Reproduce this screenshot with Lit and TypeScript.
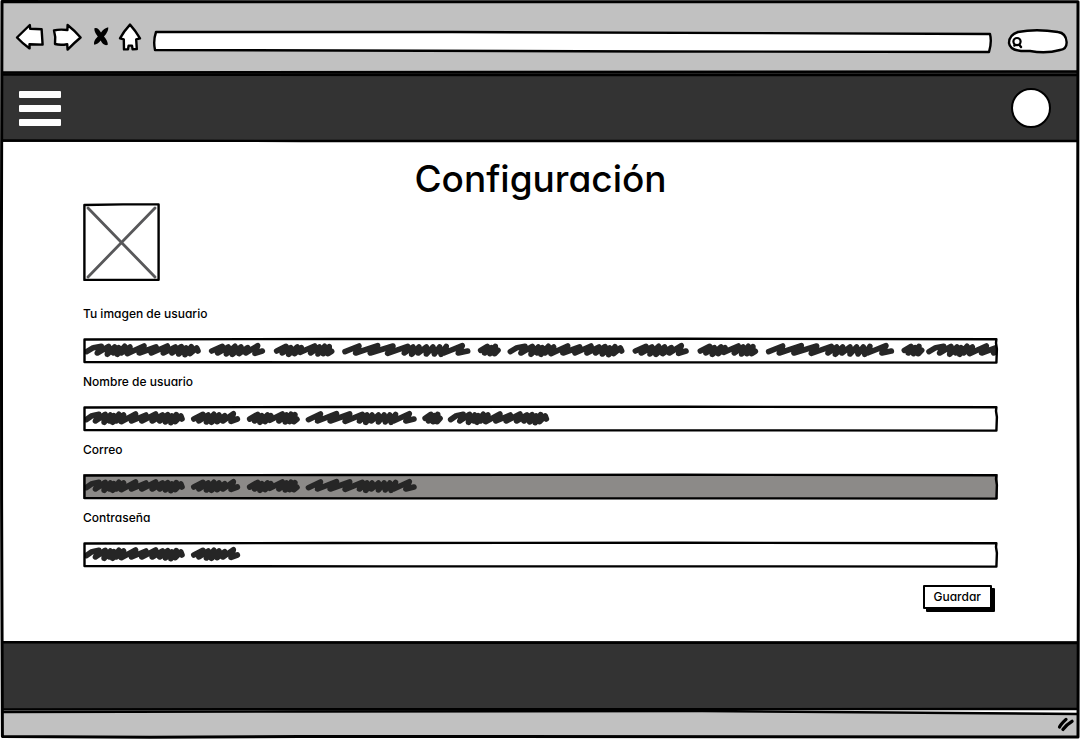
import { LitElement, html, css, svg } from "lit";
import { customElement, property } from "lit/decorators.js";

interface Word {
  width: number;
  d: string;
}

// Hand-scribbled words, drawn in units of a third of a pixel.
const A: Word = { width: 375, d: "M8,26 L28,14 L52,10 L40,30 L74,10 L70,34 L92,12 L88,30 L104,14 L100,34 L122,10 L112,30 L138,12 L130,32 L180,9 L166,30 L216,12 L202,30 L250,9 L238,30 L274,12 L264,30 L292,11 L284,33 L306,15 L303,35 L322,11 L318,32 L338,15 L342,24" };
const B: Word = { width: 195, d: "M8,24 L40,10 L26,30 L58,12 L52,33 L78,10 L70,34 L96,12 L90,32 L116,14 L110,30 L146,8 L138,31 L160,24" };
const C: Word = { width: 205, d: "M8,24 L36,10 L25,30 L50,14 L44,34 L70,12 L62,32 L82,14 L78,28 L122,9 L110,30 L136,12 L132,33 L152,10 L148,32 L166,11 L162,32 L173,25" };
const D: Word = { width: 407, d: "M8,26 L50,9 L40,30 L106,8 L84,30 L152,9 L136,31 L196,10 L186,30 L212,12 L208,34 L230,12 L228,30 L252,12 L252,33 L272,12 L276,33 L292,12 L296,34 L312,10 L305,30 L360,8 L348,30 L376,24" };
const E: Word = { width: 89, d: "M8,22 L28,10 L20,30 L40,14 L36,32 L52,10 L50,32 L60,22" };
const WORDS = [A, B, C, D, E];

@customElement("scribble-text")
export class ScribbleText extends LitElement {
  @property({ type: Number }) words = 1;
  @property({ type: Number }) stretch = 1;

  static styles = css`
    :host { display: block; pointer-events: none; }
    .ink { display: block; width: 100%; height: 100%; overflow: hidden; }
    .stroke {
      fill: none;
      stroke: #262626;
      stroke-width: 5.6;
      stroke-linecap: round;
      stroke-linejoin: round;
      vector-effect: non-scaling-stroke;
    }
  `;

  render() {
    let x = 0;
    const parts = Array.from({ length: this.words }, (_, i) => {
      const word = WORDS[i % WORDS.length];
      // Every second short word is followed by a tighter space.
      const space = i % 10 === 9 ? -15 : 0;
      const part = svg`<path class="stroke" transform="translate(${x} 0)" d=${word.d}></path>`;
      x += word.width + space;
      return part;
    });
    return html`<svg class="ink" aria-hidden="true">
      <g transform="translate(0 5) scale(${this.stretch / 3} ${1 / 3})">${parts}</g>
    </svg>`;
  }
}

@customElement("sketch-field")
export class SketchField extends LitElement {
  @property() label = "";
  @property() type = "text";
  @property({ type: Number }) words = 1;
  @property({ type: Number }) stretch = 0.86;
  @property({ type: Boolean }) disabled = false;

  static styles = css`
    :host { display: block; }
    .label { display: block; width: fit-content; font-size: 12px; line-height: 16px; margin-bottom: 16px; }
    .box { position: relative; height: 25px; }
    .input {
      display: block;
      box-sizing: border-box;
      width: 100%;
      height: 25px;
      padding: 0 6px;
      border: 0;
      border-radius: 0;
      background: #fff;
      font: inherit;
      font-size: 12px;
      outline: none;
    }
    .input:disabled { background: #8c8a88; }
    .ink { position: absolute; inset: 0 2px 0 1px; }
    .edge { position: absolute; inset: 0; width: 100%; height: 100%; overflow: visible; pointer-events: none; }
    .line { fill: none; stroke: #000; stroke-width: 2.4; stroke-linejoin: round; vector-effect: non-scaling-stroke; }
  `;

  render() {
    return html`
      <label class="label" for="field">${this.label}</label>
      <div class="box">
        <input class="input" id="field" type=${this.type} ?disabled=${this.disabled} />
        <scribble-text class="ink" .words=${this.words} .stretch=${this.stretch}></scribble-text>
        <svg class="edge" viewBox="0 0 915 25" preserveAspectRatio="none" aria-hidden="true">
          <path class="line" d="M1.5,1.5 L250,1 L600,0.8 L913.4,1.2 L913,5 L913.9,11 L913.4,24.6 L700,24.4 L300,24.4 L1.5,24 Z"></path>
        </svg>
      </div>
    `;
  }
}

@customElement("app-root")
export class AppRoot extends LitElement {
  static styles = css`
    :host {
      display: block;
      color: #000;
      font-family: Inter, Lato, "Liberation Sans", sans-serif;
      font-feature-settings: "cv11";
      font-weight: 500;
    }
    .window {
      position: relative;
      box-sizing: border-box;
      display: flex;
      flex-direction: column;
      min-height: 100vh;
      padding: 2px 2px 3px;
      background: #fff;
    }
    .frame { position: absolute; inset: 0; width: 100%; height: 100%; pointer-events: none; }
    .line { fill: none; stroke: #000; stroke-width: 2.4; stroke-linejoin: round; vector-effect: non-scaling-stroke; }
    .thick { stroke-width: 3; }
    .browser {
      display: flex;
      align-items: center;
      height: 70px;
      padding: 0 10px 0 12px;
      background: #c1c1c1;
    }
    .tool { display: block; padding: 0; border: 0; background: none; line-height: 0; }
    .back { margin-right: 6px; }
    .forward { margin-right: 10px; }
    .stop { margin-right: 8px; }
    .home { margin-right: 11px; }
    .icon { display: block; overflow: visible; }
    .shape { fill: #fff; stroke: #000; stroke-width: 2.4; stroke-linejoin: round; stroke-linecap: round; }
    .mark { fill: none; stroke: #000; stroke-linecap: round; }
    .address { position: relative; flex: 1; height: 24px; margin: 8px 14px 0 0; }
    .search { position: relative; width: 62px; height: 26px; margin-top: 8px; }
    .outline { position: absolute; inset: 0; width: 100%; height: 100%; overflow: visible; }
    .entry {
      position: absolute;
      inset: 3px 8px 3px 8px;
      box-sizing: border-box;
      width: calc(100% - 16px);
      border: 0;
      padding: 0;
      background: none;
      outline: none;
      font: inherit;
      font-size: 12px;
    }
    .search .entry { inset: 3px 8px 3px 18px; width: 36px; }
    .bar {
      position: relative;
      display: flex;
      align-items: center;
      justify-content: space-between;
      box-sizing: border-box;
      height: 70px;
      padding: 2px 27px 0 17px;
      background: #333;
    }
    .rule { position: absolute; inset: 0; width: 100%; height: 100%; overflow: visible; pointer-events: none; }
    .menu { display: flex; flex-direction: column; gap: 7px; padding: 0; border: 0; background: none; }
    .stripe { display: block; width: 42px; height: 7px; border-radius: 1px; background: #fff; }
    .avatar { box-sizing: border-box; width: 40px; height: 40px; padding: 0; border: 2px solid #000; border-radius: 50%; background: #fff; }
    .main { flex: 1; padding: 13px 80px 32px 81px; }
    .title { margin: 0; font-size: 37px; line-height: 48px; font-weight: 500; text-align: center; }
    .picture { display: block; width: 77px; height: 78px; margin-bottom: 25px; }
    .form { display: grid; gap: 11px; }
    .save {
      justify-self: end;
      box-sizing: border-box;
      height: 24px;
      margin: 7px 6px 0 0;
      padding: 0 9px;
      border: 2px solid #000;
      border-radius: 1px;
      background: #fff;
      box-shadow: 3px 3px 0 #000;
      color: #000;
      font: inherit;
      font-size: 12px;
      line-height: 20px;
    }
    .footer { position: relative; height: 69px; background: #333; }
    .status { display: flex; justify-content: flex-end; align-items: center; height: 26px; padding-right: 3px; background: #c1c1c1; }
  `;

  render() {
    return html`
      <div class="window">
        <header class="browser">
          <button class="tool back" aria-label="Atrás">
            <svg class="icon" width="31" height="28" viewBox="0 0 31 28" aria-hidden="true">
              <path class="shape" d="M3,14.5 L15.8,2 L16.2,5.8 L27.6,6.2 L28.6,21.6 L15.5,21.2 L15.6,25.4 Q8,20 3,14.5 Z"></path>
            </svg>
          </button>
          <button class="tool forward" aria-label="Adelante">
            <svg class="icon" width="31" height="28" viewBox="0 0 31 28" aria-hidden="true">
              <path class="shape" d="M3,7.5 Q8,6 16.4,7 L16.6,2 Q23,7 29.6,14.5 Q23,20 16.6,26.6 L16.2,21.2 Q9,22.4 4,21 Q5,14 3,7.5 Z"></path>
            </svg>
          </button>
          <button class="tool stop" aria-label="Detener">
            <svg class="icon" width="18" height="22" viewBox="0 0 18 22" aria-hidden="true">
              <path d="M2.4,2.2 Q6,0.8 9,6.6 Q12,2 16.2,1.2 Q17,5 12,10.4 Q16,15 15.8,18.8 Q12,20.6 8.6,14.6 Q5.8,18.6 2.2,18.8 Q1,15 5.8,10.4 Q2,6 2.4,2.2 Z"></path>
            </svg>
          </button>
          <button class="tool home" aria-label="Inicio">
            <svg class="icon" width="24" height="28" viewBox="0 0 24 28" aria-hidden="true">
              <path class="shape" d="M12,1.6 Q17,7 22,15.4 L18.2,16.4 L18.8,26 L14.6,26.4 L14,22.6 L10.6,22.6 L10,26.4 L6,26.4 L5.8,16.4 L2,15.4 Q6,8 12,1.6 Z"></path>
            </svg>
          </button>
          <div class="address">
            <svg class="outline" viewBox="0 0 840 24" preserveAspectRatio="none" aria-hidden="true">
              <path class="shape" vector-effect="non-scaling-stroke" d="M3,3 L300,3 L838,5 Q840,13 837,23 L500,22.5 L2,21 Q0,12 3,3 Z"></path>
            </svg>
            <input class="entry" type="text" aria-label="Dirección" />
          </div>
          <div class="search">
            <svg class="outline" viewBox="0 0 62 26" aria-hidden="true">
              <path class="shape" d="M12,4 Q30,0.5 52,4 Q60,5 60.6,14 Q61,21 54,22 Q40,26 24,23 L15,23 Q4,22 3,15 Q3,7 12,4 Z"></path>
              <circle class="mark" stroke-width="2.2" cx="11" cy="13.6" r="3.6"></circle>
              <path class="mark" stroke-width="2.4" d="M8.4,17.6 L9,17.2 M13.4,17 L15,19"></path>
            </svg>
            <input class="entry" type="search" aria-label="Buscar" />
          </div>
        </header>

        <nav class="bar">
          <button class="menu" aria-label="Menú">
            <span class="stripe"></span><span class="stripe"></span><span class="stripe"></span>
          </button>
          <button class="avatar" aria-label="Cuenta"></button>
          <svg class="rule" viewBox="0 0 1076 70" preserveAspectRatio="none" aria-hidden="true">
            <path class="line" d="M0,0.5 L500,0 L1076,-0.5"></path>
            <path class="line" d="M0,2.6 L500,3 L1076,3"></path>
            <path class="line" d="M0,68.5 L300,69 L1076,69"></path>
          </svg>
        </nav>

        <main class="main">
          <h1 class="title">Configuración</h1>
          <svg class="picture" viewBox="0 0 77 78" role="img" aria-label="Imagen de usuario">
            <path fill="none" stroke="#58585a" stroke-width="2.8" stroke-linecap="round" d="M5,5 L72,74 M72,5 L5,74"></path>
            <path fill="none" stroke="#000" stroke-width="2.4" stroke-linejoin="round" d="M1.4,2 L40,1.4 L75.6,1.4 L75.6,76.8 L1.4,77 Z"></path>
          </svg>
          <form class="form">
            <sketch-field label="Tu imagen de usuario" .words=${11} .stretch=${1}></sketch-field>
            <sketch-field label="Nombre de usuario" .words=${6}></sketch-field>
            <sketch-field label="Correo" .words=${4} disabled></sketch-field>
            <sketch-field label="Contraseña" type="password" .words=${2}></sketch-field>
            <button class="save" type="button">Guardar</button>
          </form>
        </main>

        <footer class="footer">
          <svg class="rule" viewBox="0 0 1076 69" preserveAspectRatio="none" aria-hidden="true">
            <path class="line" d="M0,1.2 L300,1.6 L1076,2"></path>
            <path class="line" d="M0,68.4 L600,68.2 L1076,68"></path>
            <path fill="#fff" d="M700,69.5 L1076,69.5 L1076,72 Z"></path>
            <path class="line" d="M0,71 L300,70.5 L700,70 L1076,73"></path>
          </svg>
        </footer>
        <div class="status">
          <svg class="icon" width="18" height="16" viewBox="0 0 18 16" aria-hidden="true">
            <path class="mark" stroke-width="3.2" d="M2.5,12 Q4,9 9,4.4"></path>
            <path class="mark" stroke-width="3.4" d="M6,14.4 Q9,10 15,6.4"></path>
          </svg>
        </div>

        <svg class="frame" viewBox="0 0 1080 739" preserveAspectRatio="none" aria-hidden="true">
          <path class="line thick" d="M2,1.6 L1078,1.8 L1077.6,300 L1078.4,560 L1078,737 L300,736.4 L150,737.2 L2.4,736.6 L1.6,500 L1.4,250 Z"></path>
        </svg>
      </div>
    `;
  }
}
